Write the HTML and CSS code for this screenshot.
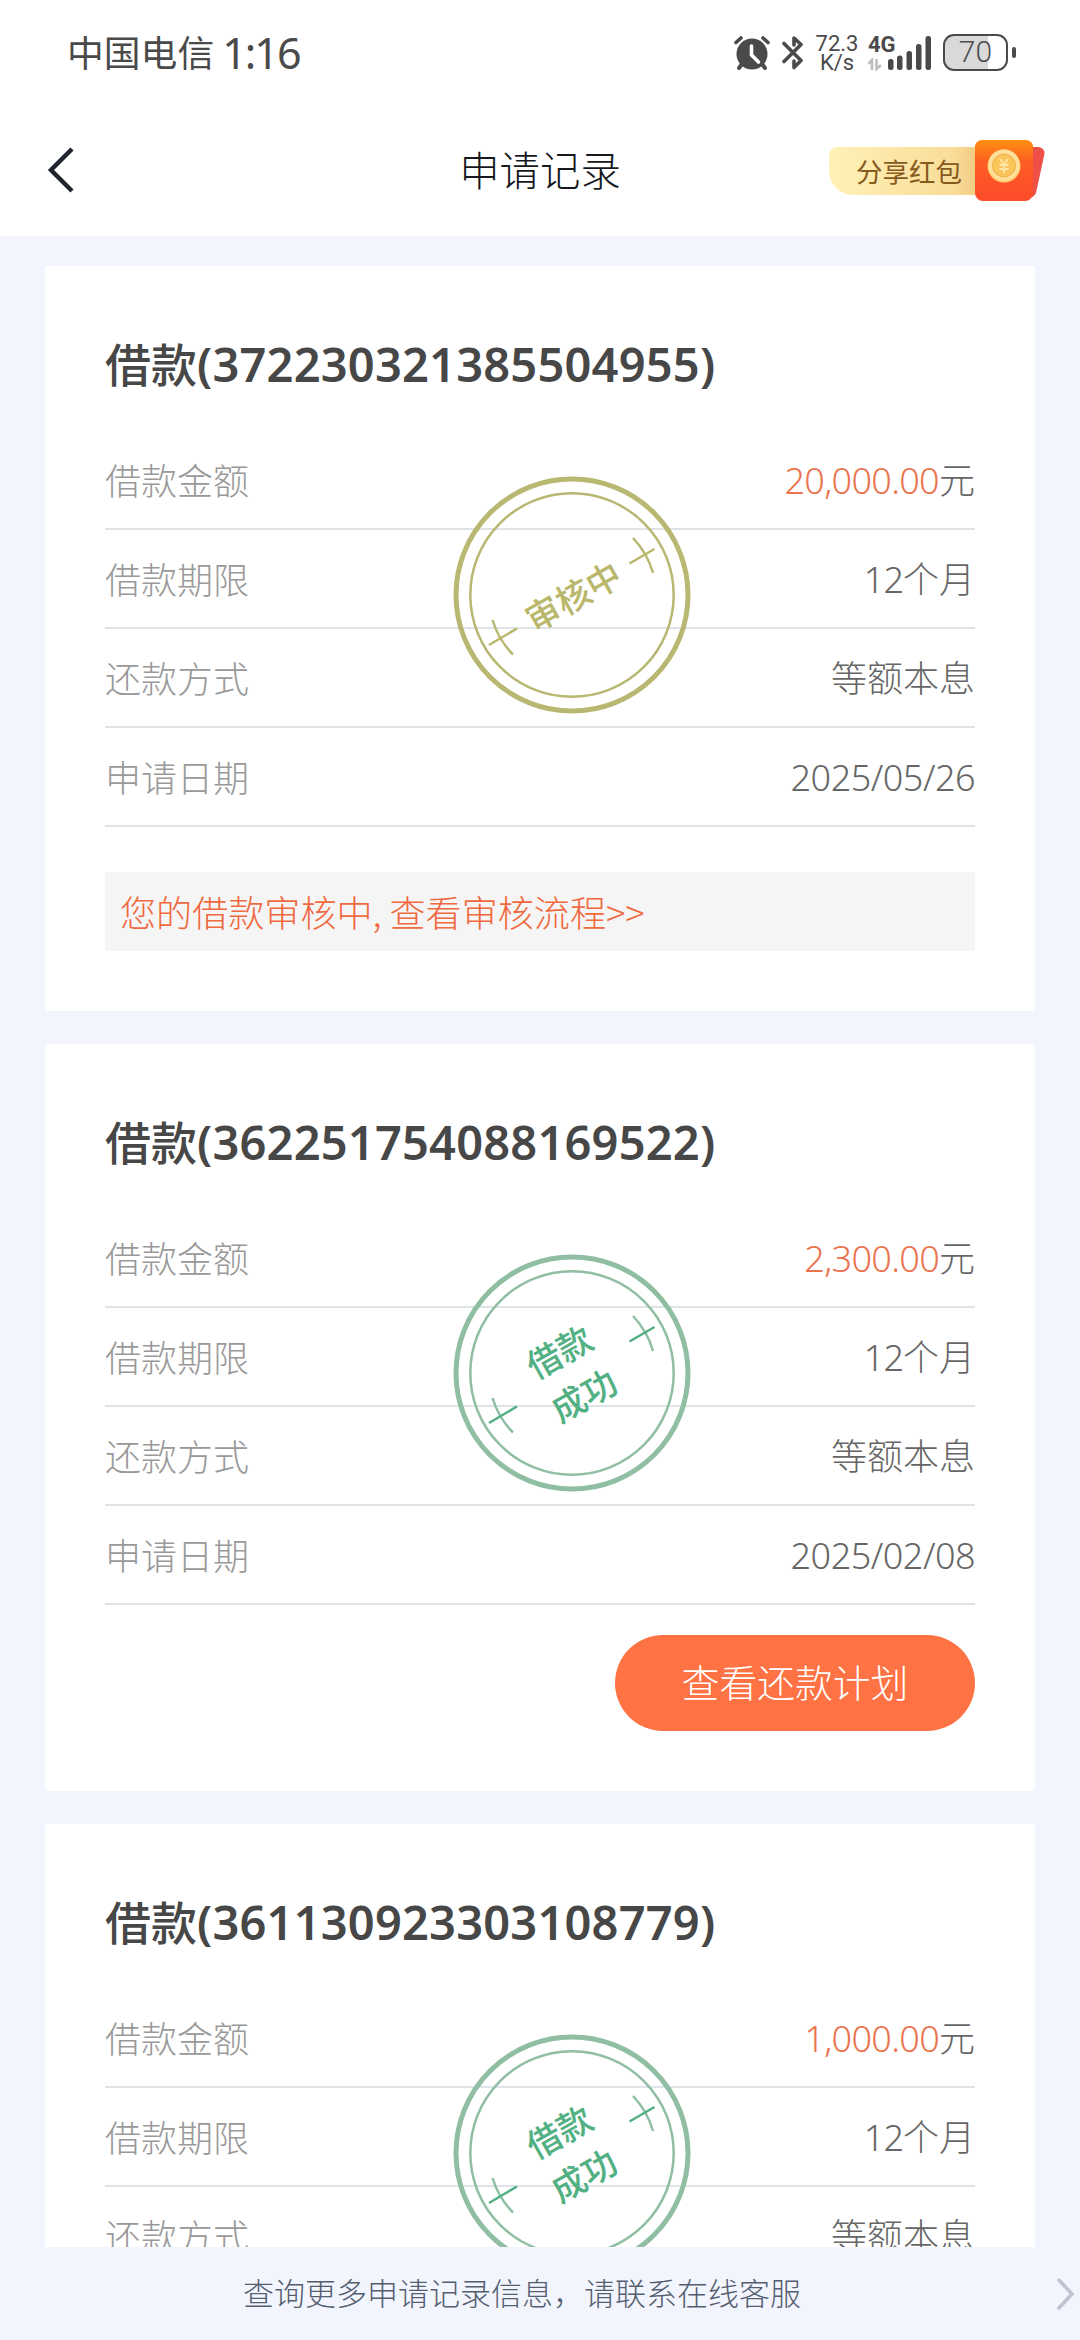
FILE: index.html
```html
<!DOCTYPE html>
<html lang="zh-CN">
<head>
<meta charset="utf-8">
<title>申请记录</title>
<link rel="stylesheet" href="styles.css">
</head>
<body>
<svg class="defs" width="0" height="0" aria-hidden="true">
  <symbol id="stamp-frame" viewBox="-119 -119 238 238">
    <g class="stamp-ring">
      <circle r="116" stroke-width="5"/>
      <circle r="101.7" stroke-width="2.5"/>
      <path d="M61-57A83.5 83.5 0 0 1 81-22M-79.5 25A83.5 83.5 0 0 0-59 59.5" stroke-width="2.5"/>
    </g>
    <path class="stamp-dash" d="M57.5-31.5 82.5-46M-83 50-55 33.5" stroke-width="2.5"/>
  </symbol>
</svg>

<header class="status">
  <div class="carrier">中国电信</div>
  <div class="clock">1:16</div>
  <div class="indicators">
    <svg class="alarm" width="36" height="36" viewBox="0 0 36 36">
      <circle cx="18" cy="19" r="15.5" fill="#4a4a4a"/>
      <path d="M2 7.500 7 3M34 7.500 29 3" stroke="#4a4a4a" stroke-width="3.600" stroke-linecap="round"/>
      <path d="M8 29 5 33M28 29 31 33" stroke="#4a4a4a" stroke-width="4" stroke-linecap="round"/>
      <path d="M17.500 11V20L24.500 27" fill="none" stroke="#fff" stroke-width="3.600" stroke-linecap="round" stroke-linejoin="round"/>
    </svg>
    <svg class="bluetooth" width="22" height="36" viewBox="0 0 22 36">
      <path d="M2 8.500 19 25.500 12 32.500V26M12 10V3L19 9.500 2 26.500" fill="none" stroke="#4a4a4a" stroke-width="3.600" stroke-linecap="round" stroke-linejoin="round"/>
    </svg>
    <div class="speed"><span>72.3</span><span>K/s</span></div>
    <div class="network">
      <span>4G</span>
      <svg width="16" height="13" viewBox="0 0 16 13"><path d="M.5 6 4 2V12M8.500 1V11L13 7" fill="none" stroke="#bdbdbd" stroke-width="2.600"/></svg>
    </div>
    <svg class="signal" width="44" height="36" viewBox="0 0 44 36" fill="#4a4a4a">
      <rect x="0" y="24" width="5.500" height="11" rx="2.500"/><rect x="9" y="20.500" width="5.500" height="14.500" rx="2.500"/><rect x="18.500" y="16" width="5.500" height="19" rx="2.500"/><rect x="28" y="9" width="5.500" height="26" rx="2.500"/><rect x="37.500" y="1" width="5.500" height="34" rx="2.500"/>
    </svg>
    <div class="battery">70</div>
    <div class="battery-tip"></div>
  </div>
</header>

<nav class="nav">
  <svg class="back" width="28" height="48" viewBox="0 0 28 48"><path d="M25 3 4 24 25 45" fill="none" stroke="#20262e" stroke-width="4.500"/></svg>
  <h1 class="nav-title">申请记录</h1>
  <div class="share">
    <span class="share-label">分享红包</span>
    <svg class="envelope" width="70" height="63" viewBox="0 0 70 63">
      <defs>
        <linearGradient id="env" x1="0" y1="0" x2="0" y2="1"><stop offset="0" stop-color="#ff8a12"/><stop offset=".2" stop-color="#ff6120"/><stop offset="1" stop-color="#fd4a2c"/></linearGradient>
        <linearGradient id="flap" x1="0" y1="0" x2="0" y2="1"><stop offset="0" stop-color="#ff9212"/><stop offset="1" stop-color="#f94a25"/></linearGradient>
      </defs>
      <path d="M52 8H64Q71 10 69 17L61 54Q59 59 52 59Z" fill="#ee5048"/>
      <rect x="0" y="1" width="58" height="61" rx="8" fill="url(#env)"/>
      <path d="M0 17V9Q0 1 8 1H50Q58 1 58 9V17Q45 29 29 31 13 29 0 17Z" fill="url(#flap)"/>
      <circle cx="29" cy="27" r="16.500" fill="#ffcf70"/>
      <circle cx="29" cy="26" r="15.500" fill="#ffe09a"/>
      <circle cx="29" cy="26.500" r="11.500" fill="#fac55a" stroke="#eeb047" stroke-width="1"/>
      <path d="M25 20 29 25.500 33 20M24.500 26H33.500M24.500 30H33.500M29 25V34" fill="none" stroke="#ffe7a8" stroke-width="1.800"/>
    </svg>
  </div>
</nav>

<main class="list">
  <section class="card">
    <h2 class="card-title">借款<span>(372230321385504955)</span></h2>
    <dl class="rows">
      <div class="row"><dt>借款金额</dt><dd><em>20,000.00</em>元</dd></div>
      <div class="row"><dt>借款期限</dt><dd><span class="term">12</span>个月</dd></div>
      <div class="row"><dt>还款方式</dt><dd>等额本息</dd></div>
      <div class="row"><dt>申请日期</dt><dd class="date">2025/05/26</dd></div>
    </dl>
    <svg class="stamp pending" viewBox="-119 -119 238 238">
      <use href="#stamp-frame" x="-119" y="-119" width="238" height="238"/>
      <text transform="translate(1.500 2) rotate(-29.500)" y="12.500">审核中</text>
    </svg>
    <p class="notice">您的借款审核中, 查看审核流程&gt;&gt;</p>
  </section>

  <section class="card">
    <h2 class="card-title">借款<span>(362251754088169522)</span></h2>
    <dl class="rows">
      <div class="row"><dt>借款金额</dt><dd><em>2,300.00</em>元</dd></div>
      <div class="row"><dt>借款期限</dt><dd><span class="term">12</span>个月</dd></div>
      <div class="row"><dt>还款方式</dt><dd>等额本息</dd></div>
      <div class="row"><dt>申请日期</dt><dd class="date">2025/02/08</dd></div>
    </dl>
    <svg class="stamp success" viewBox="-119 -119 238 238">
      <use href="#stamp-frame" x="-119" y="-119" width="238" height="238"/>
      <text transform="translate(-12.500 -20.500) rotate(-29.500)" y="12.500">借款</text>
      <text transform="translate(12 23) rotate(-29.500)" y="12.500">成功</text>
    </svg>
    <button class="plan">查看还款计划</button>
  </section>

  <section class="card">
    <h2 class="card-title">借款<span>(361130923303108779)</span></h2>
    <dl class="rows">
      <div class="row"><dt>借款金额</dt><dd><em>1,000.00</em>元</dd></div>
      <div class="row"><dt>借款期限</dt><dd><span class="term">12</span>个月</dd></div>
      <div class="row"><dt>还款方式</dt><dd>等额本息</dd></div>
    </dl>
    <svg class="stamp success" viewBox="-119 -119 238 238">
      <use href="#stamp-frame" x="-119" y="-119" width="238" height="238"/>
      <text transform="translate(-12.500 -20.500) rotate(-29.500)" y="12.500">借款</text>
      <text transform="translate(12 23) rotate(-29.500)" y="12.500">成功</text>
    </svg>
  </section>
</main>

<footer class="footer">
  <p>查询更多申请记录信息，请联系在线客服</p>
  <svg width="20" height="34" viewBox="0 0 20 34"><path d="M3 3 16 17 3 31" fill="none" stroke="#bdc4d0" stroke-width="3.500" stroke-linecap="round"/></svg>
</footer>
</body>
</html>
```
FILE: styles.css
```css
* { box-sizing: border-box; margin: 0; padding: 0; }

body {
  width: 1080px;
  height: 2340px;
  overflow: hidden;
  display: flex;
  flex-direction: column;
  background: #f2f5fe;
  font-family: "Noto Sans CJK SC", sans-serif;
  font-weight: 300;
}

.defs { display: none; }

/* Status bar */
.status {
  height: 105px;
  padding: 0 64px 0 67px;
  display: flex;
  align-items: center;
  background: #fff;
  color: #4a4a4a;
}
.carrier { padding-bottom: 3px; font-size: 36.8px; font-weight: 400; line-height: 54px; }
.clock { margin-left: 8px; padding-top: 1px; letter-spacing: -2px; font: 400 43px/54px "Noto Sans", sans-serif; }
.indicators { margin-left: auto; display: flex; align-items: center; }
.bluetooth { margin-left: 12px; }
.speed {
  width: 42px;
  margin-left: 12px;
  display: flex;
  flex-direction: column;
  align-items: center;
  font: 400 22px/19px Roboto, sans-serif;
}
.network {
  width: 26px;
  height: 36px;
  margin-left: 10px;
  display: flex;
  flex-direction: column;
  justify-content: space-between;
  font: 700 22px/19px Roboto, sans-serif;
}
.signal { margin-left: -6px; }
.battery {
  width: 65px;
  height: 37px;
  margin-left: 11px;
  border: 2.5px solid #4a4a4a;
  border-radius: 11px;
  background: linear-gradient(90deg, #d9d9d9 43px, #fff 43px);
  font: 300 30px/32px Roboto, sans-serif;
  text-align: center;
}
.battery-tip { width: 4px; height: 11px; margin-left: 4px; border-radius: 2px; background: #4a4a4a; }

/* Navigation */
.nav {
  height: 131px;
  padding: 0 35px 0 47px;
  display: grid;
  grid-template-columns: 1fr auto 1fr;
  align-items: center;
  background: #fff;
}
.back { margin-top: -2px; }
.nav-title { margin-left: -12px; padding-bottom: 4px; font-size: 40.4px; font-weight: 300; line-height: 60px; color: #16181d; }
.share { justify-self: end; display: flex; align-items: center; }
.share-label {
  width: 147px;
  height: 48px;
  margin-right: -1px;
  padding-left: 27px;
  border-radius: 8px 0 0 24px;
  background: linear-gradient(90deg, #fff1b8, #f9dc98 85%, #f2cb82);
  color: #855a1c;
  font-size: 26.5px;
  font-weight: 400;
  line-height: 48px;
}

/* Cards */
.list {
  flex: 1;
  min-height: 0;
  overflow: hidden;
  padding: 30px 45px 0;
  display: flex;
  flex-direction: column;
  gap: 33px;
}
.card {
  position: relative;
  flex: none;
  padding: 0 60px 60px;
  display: flex;
  flex-direction: column;
  border-radius: 3px;
  background: #fff;
}
.card-title {
  height: 165px;
  padding-top: 63px;
  font-size: 46px;
  font-weight: 500;
  line-height: 66px;
  color: #474747;
}
.card-title span { font-family: "Noto Sans", sans-serif; font-size: 47px; font-weight: 600; letter-spacing: 0.2px; }
.row {
  height: 99px;
  display: flex;
  justify-content: space-between;
  align-items: center;
  border-bottom: 2px solid #dfe4e8;
  font-size: 36px;
  line-height: 54px;
}
.row dt { padding-bottom: 2px; color: #999; }
.row dd { padding-top: 3px; font-family: "Noto Sans", "Noto Sans CJK SC", sans-serif; color: #666; }
.row em { font-style: normal; letter-spacing: -0.7px; color: #ea7350; }
.row .term { letter-spacing: -1px; }
.row .date { letter-spacing: -0.5px; }
.stamp { position: absolute; left: 407.5px; top: 209.5px; width: 238px; height: 238px; fill: none; }
.stamp text { font-size: 34.5px; font-weight: 500; text-anchor: middle; fill: var(--ink); }
.stamp-ring { stroke: var(--ring); }
.stamp-dash { stroke: var(--ink); }
.pending { --ring: #b8b873; --ink: #b9b76b; }
.success { --ring: #8fbea3; --ink: #52b083; }
.notice {
  height: 79px;
  margin-top: 45px;
  padding-left: 15px;
  background: #f5f5f5;
  color: #f0693f;
  font-size: 36.1px;
  line-height: 78px;
}
.plan {
  width: 360px;
  height: 96px;
  margin-top: 30px;
  padding-bottom: 4px;
  align-self: flex-end;
  border: 0;
  border-radius: 48px;
  background: #ff7243;
  color: #fff;
  font: 300 37.8px/92px "Noto Sans CJK SC", sans-serif;
}

/* Footer */
.footer {
  height: 93px;
  padding-right: 4px;
  display: flex;
  align-items: center;
  background: #f2f5fe;
  color: #555e70;
}
.footer p { margin-left: 243px; margin-right: auto; padding-bottom: 3px; font-size: 31px; line-height: 46px; }
```
